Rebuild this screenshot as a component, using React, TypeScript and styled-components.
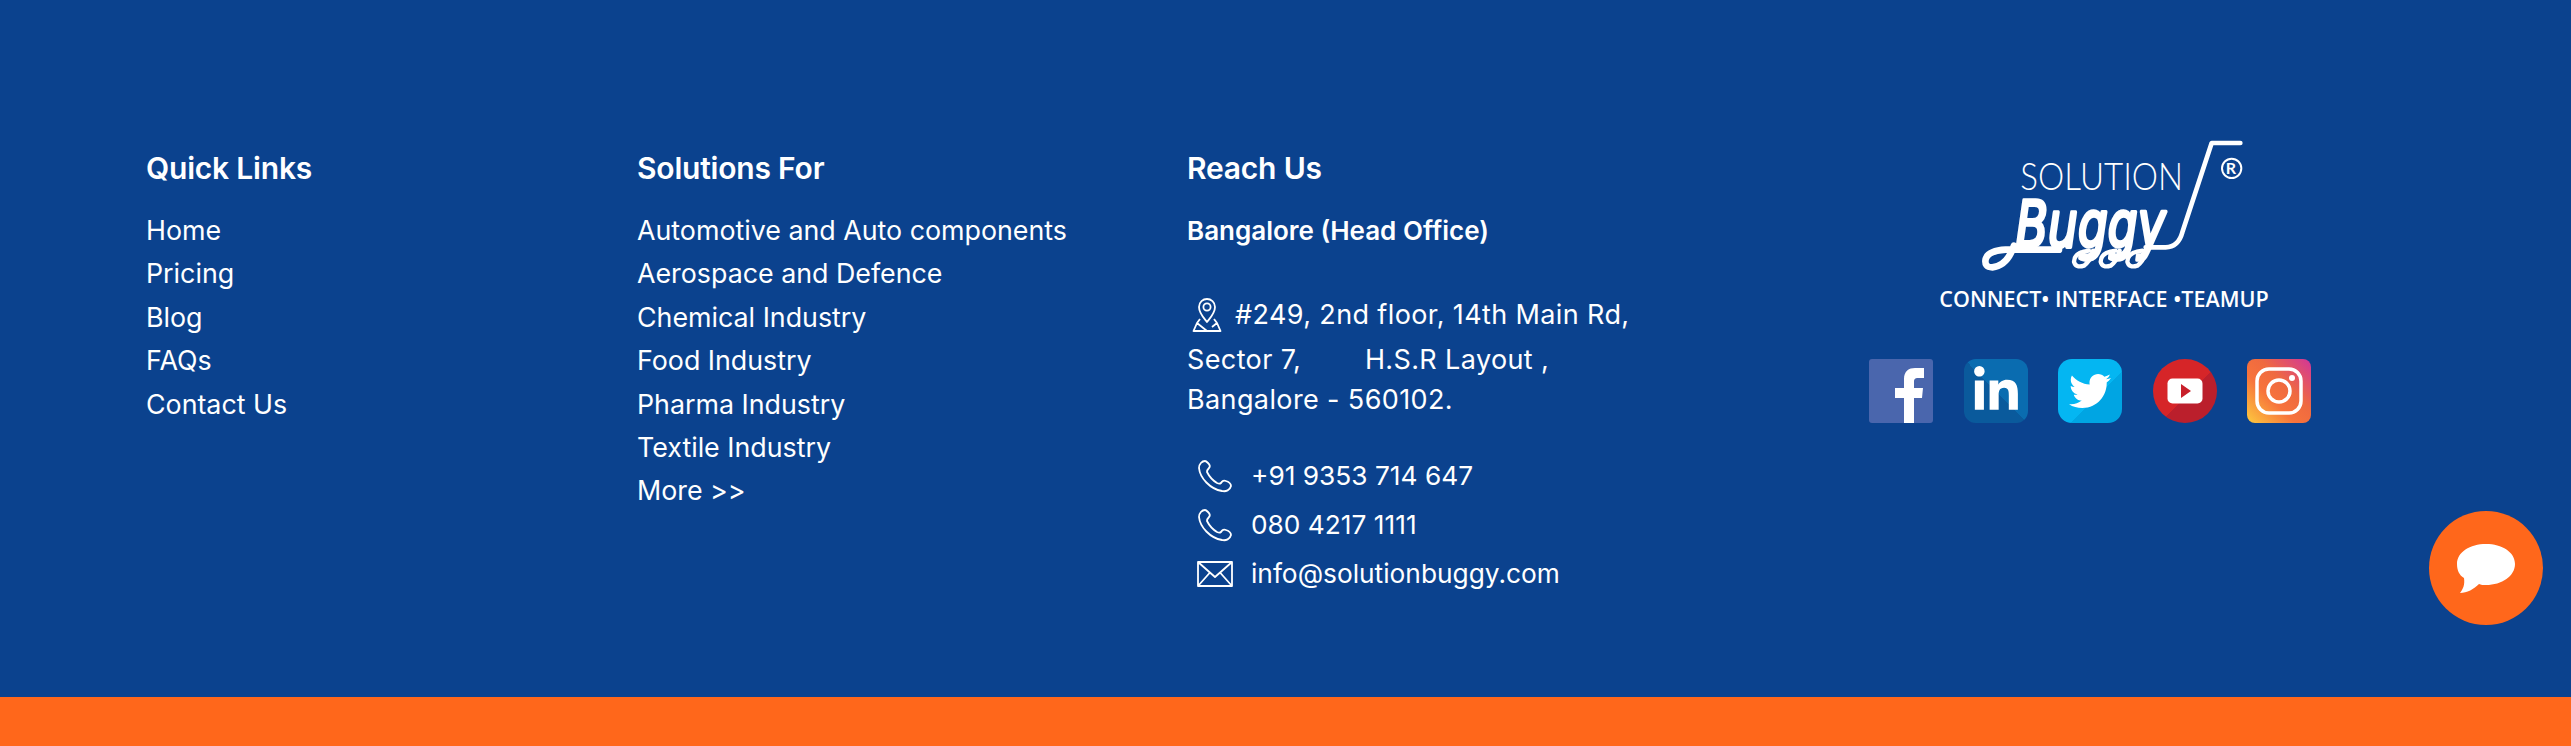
import React from 'react';
import styled, { createGlobalStyle } from 'styled-components';
import { FaLinkedinIn, FaTwitter } from 'react-icons/fa';

const GlobalStyle = createGlobalStyle`
	html, body {
		margin: 0;
		padding: 0;
		background: #0b428e;
	}
	body {
		font-family: 'Inter', 'Liberation Sans', sans-serif;
		color: #fff;
	}
`;

const Page = styled.footer`
	position: relative;
	display: flex;
	flex-direction: column;
	width: 2571px;
	height: 746px;
	overflow: hidden;
`;

const Main = styled.div`
	display: grid;
	grid-template-columns: 491px 550px 560px 686px;
	flex: 1;
	padding: 146px 0 0 146px;
	background: #0b428e;
`;

const BottomBar = styled.div`
	height: 49px;
	background: #ff671b;
`;

const Column = styled.div`
	display: flex;
	flex-direction: column;
`;

const Heading = styled.h4`
	margin: 0 0 18px;
	font-size: 30px;
	line-height: 45px;
	font-weight: 600;
	letter-spacing: -0.2px;
`;

const LinkList = styled.ul`
	display: flex;
	flex-direction: column;
	margin: 0;
	padding: 0;
	list-style: none;
`;

const LinkItem = styled.li`
	font-size: 26.8px;
	line-height: 43.4px;
	font-weight: 400;
`;

const OfficeName = styled.div`
	font-size: 26px;
	line-height: 43px;
	font-weight: 600;
	letter-spacing: 0;
	margin-bottom: 43px;
`;

const Address = styled.div`
	font-size: 27px;
	line-height: 40px;
	letter-spacing: 0.38px;
	white-space: pre;
`;

const AddressFirst = styled.div`
	display: flex;
	align-items: center;
	gap: 13px;
	height: 40px;
	padding-left: 5px;
	margin-bottom: 5px;
`;

const ContactList = styled.div`
	display: flex;
	flex-direction: column;
	gap: 8px;
	margin-top: 35px;
	padding-left: 10px;
`;

const ContactRow = styled.div`
	display: flex;
	align-items: center;
	gap: 18px;
	height: 41px;
	font-size: 26.3px;
`;

const ContactIcon = styled.svg`
	flex: none;
	width: 36px;
	height: 34px;
	fill: none;
	stroke: #fff;
	stroke-width: 1.8;
	stroke-linejoin: round;
`;

const PinIcon = styled.svg`
	flex: none;
	width: 30px;
	height: 36px;
	fill: none;
	stroke: #fff;
	stroke-width: 1.8;
	stroke-linejoin: round;
`;

const BrandColumn = styled.div`
	display: flex;
	flex-direction: column;
	align-items: center;
	margin-top: -27px;
`;

const BrandMark = styled.div`
	display: flex;
	flex-direction: column;
	align-items: center;
	margin-left: 28px;
`;

const LogoSvg = styled.svg`
	display: block;
	width: 400px;
	height: 160px;
	margin-left: -10px;
`;

const Tagline = styled.div`
	font-family: 'Open Sans', sans-serif;
	font-size: 21.5px;
	line-height: 28px;
	font-weight: 600;
	margin-top: 6px;
	white-space: pre;
`;

const SocialRow = styled.div`
	display: flex;
	gap: 30.5px;
	align-items: center;
	margin-top: 46px;
`;

const SocialTile = styled.div<{ $bg: string; $radius: string }>`
	display: flex;
	align-items: center;
	justify-content: center;
	width: 64px;
	height: 64px;
	background: ${p => p.$bg};
	border-radius: ${p => p.$radius};
	overflow: hidden;
	color: #fff;
`;

const ChatBubble = styled.div`
	position: absolute;
	right: 28px;
	bottom: 121px;
	display: flex;
	align-items: center;
	justify-content: center;
	width: 114px;
	height: 114px;
	border-radius: 50%;
	background: #ff671b;
`;

const PhoneGlyph = () => (
	<ContactIcon viewBox='0 0 36 34'>
		<path d='M8 2 C5 2 2 5 2 9 C3 19 13 30 25 32 C29 33 33 31 34 27 C34 25 32 23 29 22 C27 21 25 22 24 24 C23 25 22 25 20 24 C15 21 12 17 10 13 C10 11 11 10 12 9 C13 8 13 6 11 4 C10 3 9 2 8 2 Z' />
	</ContactIcon>
);

const MailGlyph = () => (
	<ContactIcon viewBox='0 0 36 34'>
		<path d='M1 5 H35 V29 H1 Z M1 5 L18 20 L35 5 M1 29 L13 15.5 M35 29 L23 15.5' />
	</ContactIcon>
);

const LocationGlyph = () => (
	<PinIcon viewBox='0 0 30 36'>
		<path d='M15 25 C11 20 7 16 7 10 C7 5 11 2 15 2 C19 2 23 5 23 10 C23 16 19 20 15 25 Z' />
		<circle cx='15' cy='10' r='3.6' />
		<path d='M8 22 L5 26 L1.5 34 H28.5 L25 26 L22 22 M5 26 L15 34 M25 26 L20 30' />
	</PinIcon>
);

const Logo = () => (
	<LogoSvg viewBox='0 0 1200 480'>
		<text
			x='364'
			y='212'
			fontFamily='Lato, sans-serif'
			fontWeight='300'
			fontSize='111'
			fill='#fff'
			textLength='488'
			lengthAdjust='spacingAndGlyphs'
		>
			SOLUTION
		</text>
		<text x='980' y='166' fontFamily='Lato, sans-serif' fontWeight='700' fontSize='48' fill='#fff'>
			R
		</text>
		<circle cx='998' cy='148' r='29' fill='none' stroke='#fff' strokeWidth='6' />
		<text
			x='350'
			y='385'
			fontFamily="'DejaVu Sans', sans-serif"
			fontStyle='italic'
			fontSize='190'
			fill='#fff'
			stroke='#fff'
			strokeWidth='11'
			strokeLinejoin='round'
			textLength='450'
			lengthAdjust='spacingAndGlyphs'
		>
			Buggy
		</text>
		<g fill='none' stroke='#fff' strokeLinecap='round' strokeLinejoin='round'>
			<path strokeWidth='14' d='M1024 72 H938 L850 340 Q838 384 800 385 H740' />
			<path strokeWidth='20' d='M345 380 Q325 440 280 445 Q255 445 260 420 Q268 395 320 392 H480' />
			<path strokeWidth='13' d='M570 395 Q525 400 525 428 Q530 448 555 440 Q575 425 582 395 M650 395 Q605 400 605 428 Q610 448 635 440 Q655 425 662 395 M730 395 Q685 400 685 428 Q690 448 715 440 Q735 425 742 395' />
		</g>
	</LogoSvg>
);

const FacebookTile = () => (
	<SocialTile $bg='#4a66ad' $radius='3px'>
		<svg width='64' height='64' viewBox='0 0 64 64'>
			<path fill='#fff' d='M35 64 V39 H26 V29 H35 V20 C35 12 40 9 46 9 H55 V19 H49 C46 19 45 20 45 23 V29 H54 L53 39 H45 V64 Z' />
		</svg>
	</SocialTile>
);

const YoutubeTile = () => (
	<SocialTile $bg='linear-gradient(135deg, #d62528 55%, #bb1f2c 55%)' $radius='50%'>
		<svg width='36' height='26' viewBox='0 0 36 26'>
			<rect width='35' height='25' x='0.5' y='0.5' rx='5' fill='#fff' />
			<path fill='#c8202b' d='M14 6 L24 13 L14 20 Z' />
		</svg>
	</SocialTile>
);

const InstagramTile = () => (
	<SocialTile $bg='linear-gradient(45deg, #fdcb3f 0%, #f7733c 38%, #ef6a40 60%, #d2359a 100%)' $radius='8px'>
		<svg width='64' height='64' viewBox='0 0 64 64' fill='none' stroke='#fff'>
			<rect x='10' y='10' width='44' height='44' rx='12' strokeWidth='3.5' />
			<circle cx='32' cy='32' r='11' strokeWidth='3.5' />
			<circle cx='45' cy='19' r='3' fill='#fff' stroke='none' />
		</svg>
	</SocialTile>
);

const quickLinks = ['Home', 'Pricing', 'Blog', 'FAQs', 'Contact Us'];
const solutions = [
	'Automotive and Auto components',
	'Aerospace and Defence',
	'Chemical Industry',
	'Food Industry',
	'Pharma Industry',
	'Textile Industry',
	'More >>',
];

export default function App() {
	return (
		<>
			<GlobalStyle />
			<Page>
				<Main>
					<Column>
						<Heading>Quick Links</Heading>
						<LinkList>
							{quickLinks.map(link => (
								<LinkItem key={link}>{link}</LinkItem>
							))}
						</LinkList>
					</Column>
					<Column>
						<Heading>Solutions For</Heading>
						<LinkList>
							{solutions.map(link => (
								<LinkItem key={link}>{link}</LinkItem>
							))}
						</LinkList>
					</Column>
					<Column>
						<Heading>Reach Us</Heading>
						<OfficeName>Bangalore (Head Office)</OfficeName>
						<Address>
							<AddressFirst>
								<LocationGlyph />
								<span>#249, 2nd floor, 14th Main Rd,</span>
							</AddressFirst>
							<div>{'Sector 7,        H.S.R Layout ,'}</div>
							<div>Bangalore - 560102.</div>
						</Address>
						<ContactList>
							<ContactRow>
								<PhoneGlyph />
								+91 9353 714 647
							</ContactRow>
							<ContactRow>
								<PhoneGlyph />
								080 4217 1111
							</ContactRow>
							<ContactRow>
								<MailGlyph />
								info@solutionbuggy.com
							</ContactRow>
						</ContactList>
					</Column>
					<BrandColumn>
						<BrandMark>
							<Logo />
							<Tagline>{'CONNECT• INTERFACE •TEAMUP'}</Tagline>
						</BrandMark>
						<SocialRow>
							<FacebookTile />
							<SocialTile $bg='linear-gradient(45deg, #0a5a9c 50%, #0a6cb0 50%)' $radius='12px'>
								<FaLinkedinIn size={50} />
							</SocialTile>
							<SocialTile $bg='linear-gradient(135deg, #04b6f2 60%, #00a5e3 60%)' $radius='14px'>
								<FaTwitter size={42} />
							</SocialTile>
							<YoutubeTile />
							<InstagramTile />
						</SocialRow>
					</BrandColumn>
				</Main>
				<BottomBar />
				<ChatBubble>
					<svg width='60' height='51' viewBox='0 0 60 51'>
						<path fill='#fff' d='M30 1 C46 1 59 9 59 21 C59 33 46 42 30 42 C27 42 25 42 23 41 C18 46 11 50 4 50 C7 46 9 42 8 35 C3 32 1 27 1 21 C1 9 14 1 30 1 Z' />
					</svg>
				</ChatBubble>
			</Page>
		</>
	);
}
